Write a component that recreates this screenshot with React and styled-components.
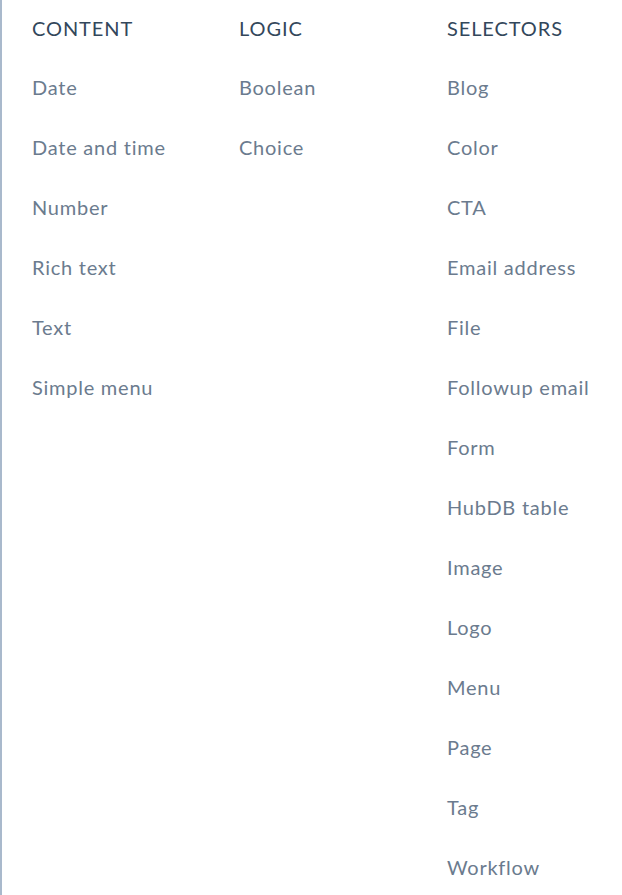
import React from "react";
import styled, { createGlobalStyle } from "styled-components";

const Global = createGlobalStyle`
  html, body { margin: 0; padding: 0; background: #fff; }
  body { font-family: Lato, "Open Sans", sans-serif; }
`;

const Panel = styled.div`
  box-sizing: border-box;
  width: 622px;
  min-height: 895px;
  border-left: 2px solid #a9b9cc;
  padding-left: 30px;
  display: grid;
  grid-template-columns: 207px 208px 1fr;
  align-items: start;
`;

const Column = styled.div`
  display: flex;
  flex-direction: column;
`;

const Heading = styled.div`
  font-size: 20px;
  line-height: 56px;
  color: #33475b;
  font-weight: 400;
  letter-spacing: 0.9px;
  margin-bottom: 1px;
`;

const Item = styled.div`
  font-size: 20px;
  line-height: 60px;
  color: #6b7b8e;
  font-weight: 400;
  letter-spacing: 0.75px;
`;

const columns = [
  { title: "CONTENT", items: ["Date", "Date and time", "Number", "Rich text", "Text", "Simple menu"] },
  { title: "LOGIC", items: ["Boolean", "Choice"] },
  {
    title: "SELECTORS",
    items: ["Blog", "Color", "CTA", "Email address", "File", "Followup email", "Form", "HubDB table", "Image", "Logo", "Menu", "Page", "Tag", "Workflow"],
  },
];

export default function App() {
  return (
    <>
      <Global />
      <Panel>
        {columns.map((c) => (
          <Column key={c.title}>
            <Heading>{c.title}</Heading>
            {c.items.map((i) => (
              <Item key={i}>{i}</Item>
            ))}
          </Column>
        ))}
      </Panel>
    </>
  );
}
